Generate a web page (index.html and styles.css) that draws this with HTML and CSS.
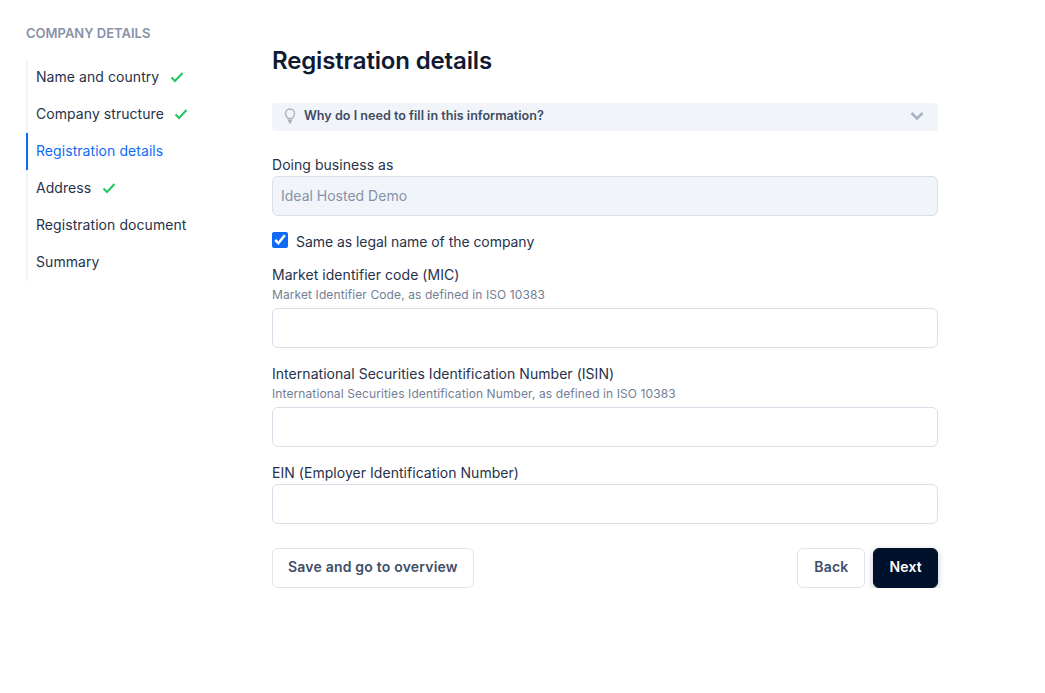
FILE: index.html
```html
<!DOCTYPE html>
<html lang="en">
<head>
  <meta charset="UTF-8">
  <meta name="viewport" content="width=device-width, initial-scale=1.0">
  <title>Registration details</title>
  <link rel="stylesheet" href="styles.css">
</head>
<body>
  <div class="page">
    <!-- sidebar -->
    <nav class="sidebar">
      <h3 class="sidebar-title">COMPANY DETAILS</h3>
      <ul class="steps">
        <li class="step">Name and country
          <svg class="check" viewBox="0 0 14 12"><path d="M1.500 6.500 5 10 12.500 2"/></svg>
        </li>
        <li class="step">Company structure
          <svg class="check" viewBox="0 0 14 12"><path d="M1.500 6.500 5 10 12.500 2"/></svg>
        </li>
        <li class="step active">Registration details</li>
        <li class="step">Address
          <svg class="check" viewBox="0 0 14 12"><path d="M1.500 6.500 5 10 12.500 2"/></svg>
        </li>
        <li class="step">Registration document</li>
        <li class="step">Summary</li>
      </ul>
    </nav>

    <!-- form -->
    <main class="content">
      <h1>Registration details</h1>

      <div class="tip">
        <svg class="bulb" viewBox="0 0 14 16">
          <path d="M4.800 10.500C4.600 9.300 2.500 8.300 2.500 5.500a4.500 4.500 0 0 1 9 0c0 2.800-2.100 3.800-2.300 5z"/>
          <path class="bulb-base" d="M5 12.500h4M5.800 14.500h2.400"/>
        </svg>
        <span class="tip-text">Why do I need to fill in this information?</span>
        <svg class="chevron" viewBox="0 0 14 10"><path d="M1.500 2 7 7.500 12.500 2"/></svg>
      </div>

      <div class="field first">
        <label class="label">Doing business as</label>
        <input class="input" type="text" value="Ideal Hosted Demo" disabled>
      </div>

      <label class="checkbox-row">
        <input class="checkbox" type="checkbox" checked>
        <span>Same as legal name of the company</span>
      </label>

      <div class="field mic">
        <label class="label">Market identifier code (MIC)</label>
        <div class="hint">Market Identifier Code, as defined in ISO 10383</div>
        <input class="input" type="text">
      </div>

      <div class="field">
        <label class="label">International Securities Identification Number (ISIN)</label>
        <div class="hint">International Securities Identification Number, as defined in ISO 10383</div>
        <input class="input" type="text">
      </div>

      <div class="field">
        <label class="label">EIN (Employer Identification Number)</label>
        <input class="input" type="text">
      </div>

      <div class="actions">
        <button class="btn save">Save and go to overview</button>
        <div class="actions-right">
          <button class="btn">Back</button>
          <button class="btn primary">Next</button>
        </div>
      </div>
    </main>
  </div>
</body>
</html>
```

FILE: styles.css
```css
* {
  margin: 0;
  padding: 0;
  box-sizing: border-box;
}

body {
  font-family: Inter, "Noto Sans", sans-serif;
  color: #27324a;
  background: white;
}

.page {
  display: flex;
  align-items: flex-start;
  padding-left: 26px;
}

/* sidebar */
.sidebar {
  width: 246px;
  padding-top: 25px;
}

.sidebar-title {
  font-size: 13px;
  line-height: 16px;
  font-weight: 600;
  color: #8792a8;
  margin-bottom: 18px;
}

.steps {
  list-style: none;
  border-left: 2px solid #f1f5f9;
}

.step {
  display: flex;
  align-items: center;
  gap: 10.5px;
  height: 37px;
  margin-left: -2px;
  padding: 0 0 2px 8px;
  font-size: 14px;
  letter-spacing: 0.06px;
  border-left: 2px solid transparent;
}

.step.active {
  color: #0f6bf5;
  border-left-color: #0f6bf5;
}

.check {
  width: 14px;
  height: 12px;
  fill: none;
  stroke: #22c55e;
  stroke-width: 2;
}

/* form */
.content {
  width: 666px;
  padding-top: 46px;
}

h1 {
  font-size: 24px;
  line-height: 30px;
  font-weight: 600;
  letter-spacing: -0.15px;
  color: #0f1a33;
  margin-bottom: 27px;
}

.tip {
  display: flex;
  align-items: center;
  height: 28px;
  padding: 0 14px 0 11px;
  background: #f1f5f9;
  border-radius: 4px;
}

.bulb {
  width: 14px;
  height: 16px;
  fill: none;
  stroke: #a9b3c3;
  stroke-width: 1.4;
  margin: 0 7px 2px 0;
}

.bulb-base {
  stroke-width: 1.8;
}

.tip-text {
  flex: 1;
  padding-bottom: 3px;
  font-size: 12.6px;
  font-weight: 600;
  color: #3f4b63;
}

.chevron {
  width: 14px;
  height: 10px;
  margin-bottom: 2px;
  fill: none;
  stroke: #a9b3c3;
  stroke-width: 2.6;
}

.field {
  margin-top: 16px;
}

.field.first {
  margin-top: 24px;
}

.field.mic {
  margin-top: 13px;
}

.label {
  display: block;
  font-size: 14px;
  line-height: 20px;
  letter-spacing: 0.04px;
  color: #27324a;
  margin-bottom: 1px;
}

.hint {
  margin: 2px 0 5px;
  font-size: 12px;
  line-height: 16px;
  letter-spacing: 0.1px;
  color: #727e95;
}

.input {
  display: block;
  width: 100%;
  height: 40px;
  padding: 0 8px 2px;
  font-family: inherit;
  font-size: 14px;
  color: #27324a;
  background: white;
  border: 1px solid #d9dfe8;
  border-radius: 6px;
}

.input:disabled {
  color: #8792a8;
  background: #f1f5f9;
}

.checkbox-row {
  display: flex;
  align-items: flex-start;
  gap: 8px;
  margin-top: 16px;
  height: 20px;
  font-size: 14px;
  line-height: 20px;
  letter-spacing: -0.05px;
}

.checkbox {
  width: 16px;
  height: 16px;
  margin: 0;
  accent-color: #0f6bf5;
}

/* buttons */
.actions {
  display: flex;
  justify-content: space-between;
  margin-top: 24px;
}

.actions-right {
  display: flex;
  gap: 8px;
}

.btn {
  height: 40px;
  padding: 0 16px 3px;
  font-family: inherit;
  font-size: 14px;
  font-weight: 600;
  letter-spacing: 0.2px;
  color: #414e68;
  background: white;
  border: 1px solid #dfe3ea;
  border-radius: 6px;
  cursor: pointer;
}

.btn.save {
  padding: 0 15px 3px;
}

.btn.primary {
  padding: 0 15px 3px;
  color: white;
  background: #00112c;
  border-color: #00112c;
  box-shadow: 0 2px 6px rgba(0, 17, 44, 0.25);
}
```
